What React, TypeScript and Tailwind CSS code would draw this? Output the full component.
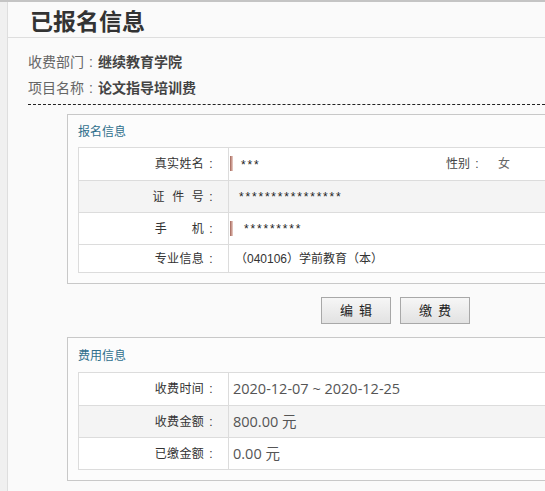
const CJK = 'font-["Liberation_Sans","Noto_Sans_CJK_SC",sans-serif]';

interface Row {
  label: string;
  value: React.ReactNode;
  pl: string;
  shade?: boolean;
  h: string;
  mark?: boolean;
}

const Mark = () => (
  <span className="absolute left-[1px] top-[8px] h-[15px] w-[3px] bg-gradient-to-r from-[#8a3a2a] to-[#e8c8c0] opacity-80" />
);

// colon sits centred in its own slot, as in the original page
const Colon = () => <span className="inline-block w-[14px] text-center">:</span>;

const InfoTable = ({ rows, valueClass }: { rows: Row[]; valueClass: string }) => (
  <div className="w-[480px] border border-[#dcdcdc] bg-white">
    {rows.map((r, i) => (
      <div
        key={r.label}
        className={`flex ${r.h} ${i > 0 ? 'border-t border-[#dcdcdc]' : ''} ${r.shade ? 'bg-[#f4f4f4]' : 'bg-white'}`}
      >
        <div className="flex w-[150px] shrink-0 items-center justify-end border-r border-[#dcdcdc] pr-[10px] text-[12px] tracking-[0.3px] text-[#333]">
          {r.label}
          <Colon />
        </div>
        <div className={`relative flex flex-1 items-center ${r.pl} ${valueClass}`}>
          {r.mark ? <Mark /> : null}
          {r.value}
        </div>
      </div>
    ))}
  </div>
);

const Panel = ({ title, children, top }: { title: string; children: React.ReactNode; top: string }) => (
  <div className={`ml-[59px] w-[520px] border border-[#c8c8c8] bg-[#fcfcfc] pb-[10px] pl-[10px] ${top}`}>
    <div className="h-[20px] text-[12px] leading-[20px] text-[#2f6f8c]">{title}</div>
    {children}
  </div>
);

const Stars = ({ n }: { n: number }) => (
  <span className="text-[12px] tracking-[1.8px] text-[#222]">{'*'.repeat(n)}</span>
);

export default function App() {
  const regRows: Row[] = [
    {
      label: '真实姓名',
      h: 'h-[32px]',
      pl: 'pl-[12px]',
      mark: true,
      value: (
        <>
          <span className="w-[205px]">
            <Stars n={3} />
          </span>
          <span className="text-[12px] text-[#444]">
            性别
            <Colon />
          </span>
          <span className="ml-[14px] text-[12px] text-[#666]">女</span>
        </>
      ),
    },
    {
      label: '证\u00a0\u00a0件\u00a0\u00a0号',
      h: 'h-[32px]',
      pl: 'pl-[10px]',
      shade: true,
      value: <Stars n={16} />,
    },
    {
      label: '手\u3000\u3000机',
      h: 'h-[32px]',
      pl: 'pl-[15px]',
      mark: true,
      value: <Stars n={9} />,
    },
    {
      label: '专业信息',
      h: 'h-[28px]',
      pl: 'pl-[6px]',
      value: <span className="text-[12px] text-[#333]">（040106）学前教育（本）</span>,
    },
  ];

  const feeRows: Row[] = [
    { label: '收费时间', h: 'h-[32px]', pl: 'pl-[4px]', value: '2020-12-07 ~ 2020-12-25' },
    { label: '收费金额', h: 'h-[32px]', pl: 'pl-[4px]', shade: true, value: '800.00 元' },
    { label: '已缴金额', h: 'h-[32px]', pl: 'pl-[4px]', value: '0.00 元' },
  ];

  return (
    <div className={`h-[491px] w-[545px] overflow-hidden border-t-2 border-[#c4c4c4] bg-[#f0f0f0] ${CJK}`}>
      <div className="ml-[7px] h-full border-l border-[#dedede] bg-[#fafafa]">
        <div className="h-[36px] border-b border-[#dedede] pl-[22px] pt-[5px] text-[23px] font-bold leading-[30px] text-[#333]">
          已报名信息
        </div>

        <div className="mt-[11px] pl-[20px] text-[14px] leading-[26px]">
          <div>
            <span className="text-[#666]">
              收费部门
              <Colon />
            </span>
            <span className="font-bold text-[#444]">继续教育学院</span>
          </div>
          <div>
            <span className="text-[#666]">
              项目名称
              <Colon />
            </span>
            <span className="font-bold text-[#444]">论文指导培训费</span>
          </div>
        </div>
        <div className="ml-[20px] mt-[3px] border-b border-dashed border-[#222]" />

        <div className="mt-[9px]">
          <Panel title="报名信息" top="pt-[7px]">
            <div className="mt-[5px]">
              <InfoTable rows={regRows} valueClass="" />
            </div>
          </Panel>
        </div>

        <div className="mt-[13px] flex gap-[9px] pl-[313px]">
          <button
            type="button"
            className="h-[27px] w-[70px] border border-[#a8a8a8] bg-gradient-to-b from-[#f6f6f6] to-[#e2e2e2] pl-[6px] text-[13px] tracking-[6px] text-[#222]"
          >
            编辑
          </button>
          <button
            type="button"
            className="h-[27px] w-[70px] border border-[#a8a8a8] bg-gradient-to-b from-[#f6f6f6] to-[#e2e2e2] pl-[6px] text-[13px] tracking-[6px] text-[#222]"
          >
            缴费
          </button>
        </div>

        <div className="mt-[13px]">
          <Panel title="费用信息" top="pt-[8px]">
            <div className="mt-[6px]">
              <InfoTable
                rows={feeRows}
                valueClass='font-["Open_Sans","Noto_Sans_CJK_SC",sans-serif] text-[14.5px] text-[#555]'
              />
            </div>
          </Panel>
        </div>
      </div>
    </div>
  );
}
